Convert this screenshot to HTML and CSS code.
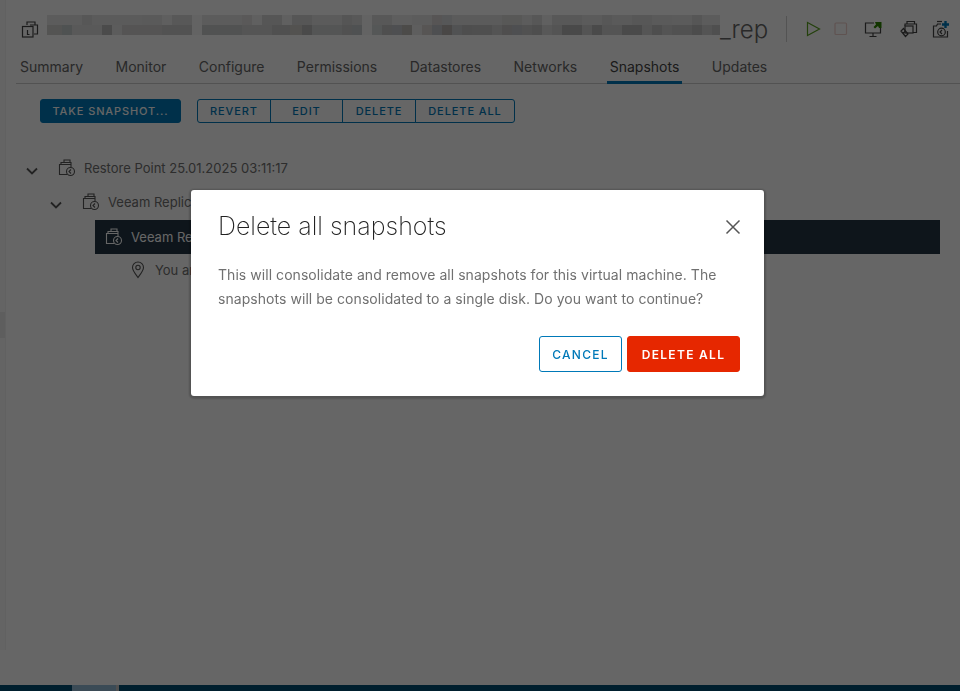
FILE: index.html
```html
<!DOCTYPE html>
<html lang="en">
<head>
  <meta charset="UTF-8" />
  <title>Snapshots</title>
  <link rel="stylesheet" href="styles.css">
</head>
<body>
  <div class="app">
    <div class="sidebar-edge"><span class="grip"></span></div>
    <main class="main">
      <header class="vm-header">
        <svg class="vm-icon" viewBox="0 0 18 18" width="18" height="18"><path d="M6 5V2h8v3M9 5h7.500v9H13" /><rect x="1.500" y="6.500" width="10.500" height="10.500" /><path d="M6.500 10v4.500h2" /></svg>
        <div class="mosaic"></div>
        <span class="vm-name">_rep</span>
        <div class="vm-actions">
          <svg viewBox="0 0 18 18" width="18" height="18" class="act-play"><path d="M3.500 2.500L15.500 9 3.500 15.500Z" /></svg>
          <svg viewBox="0 0 18 18" width="18" height="18" class="act-stop"><rect x="3" y="3" width="11.500" height="11.500" rx="1" /></svg>
          <svg viewBox="0 0 18 18" width="18" height="18" class="act-console"><path d="M10 3H1.500v10h15V8M9 13v3M5.500 16.500h7" /><path class="green" d="M11 2h6.500v6h-2.500l-1-2-3 2.500-1.500-1.500 2.500-2.500z" /></svg>
          <svg viewBox="0 0 18 18" width="18" height="18" class="act-clone"><path d="M7 4V1.500h7.500V4M5 6V4h11.500v8.500H13" /><rect x="5" y="6" width="8" height="7" /><path d="M1 11l4.500 5.500 2.500-2.500L3.500 8.500ZM3 13.500l2.500-2.500" /></svg>
          <svg viewBox="0 0 18 18" width="18" height="18" class="act-snap"><path d="M9 4H5.500L4.500 6H1.500v11h14v-6" /><path d="M5 1.500h5" /><circle cx="9.500" cy="12" r="3.800" /><path d="M10 10l-2 2 2 2" /><path class="blue" d="M13.500 1v7M10 4.500h7" /></svg>
        </div>
      </header>

      <nav class="tabs">
        <a class="tab">Summary</a>
        <a class="tab">Monitor</a>
        <a class="tab">Configure</a>
        <a class="tab">Permissions</a>
        <a class="tab">Datastores</a>
        <a class="tab">Networks</a>
        <a class="tab active">Snapshots</a>
        <a class="tab">Updates</a>
      </nav>

      <div class="toolbar">
        <button class="btn btn-solid">TAKE SNAPSHOT...</button>
        <div class="btn-group">
          <button class="btn w-revert">REVERT</button>
          <button class="btn w-edit">EDIT</button>
          <button class="btn w-delete">DELETE</button>
          <button class="btn w-all">DELETE ALL</button>
        </div>
      </div>

      <div class="tree">
        <div class="tree-row level-0">
          <svg class="caret" viewBox="0 0 12 8" width="12" height="8"><path d="M1 1.500l5 5 5-5" /></svg>
          <svg class="snap" viewBox="0 0 18 18" width="18" height="18"><path d="M6 3.500V1h6v2.500M3 5.500V3.500h10V7M9 15.500H1.500V5.500h11.500V8" /><circle cx="12.500" cy="12.500" r="4" /><path d="M13 10.500l-2 2 2 2" /></svg>
          <span>Restore Point 25.01.2025 03:11:17</span>
        </div>
        <div class="tree-row level-1">
          <svg class="caret" viewBox="0 0 12 8" width="12" height="8"><path d="M1 1.500l5 5 5-5" /></svg>
          <svg class="snap" viewBox="0 0 18 18" width="18" height="18"><path d="M6 3.500V1h6v2.500M3 5.500V3.500h10V7M9 15.500H1.500V5.500h11.500V8" /><circle cx="12.500" cy="12.500" r="4" /><path d="M13 10.500l-2 2 2 2" /></svg>
          <span>Veeam Replica</span>
        </div>
        <div class="tree-row level-2 selected">
          <svg class="snap" viewBox="0 0 18 18" width="18" height="18"><path d="M6 3.500V1h6v2.500M3 5.500V3.500h10V7M9 15.500H1.500V5.500h11.500V8" /><circle cx="12.500" cy="12.500" r="4" /><path d="M13 10.500l-2 2 2 2" /></svg>
          <span>Veeam Replica</span>
        </div>
        <div class="tree-row level-3">
          <svg class="pin" viewBox="0 0 14 18" width="14" height="18"><path d="M7 16.500C4 12.500 1.500 9.500 1.500 6.500a5.500 5.500 0 0 1 11 0c0 3-2.500 6-5.500 10z" /><circle cx="7" cy="6.500" r="2.200" /></svg>
          <span>You are</span>
        </div>
      </div>
    </main>
    <footer class="taskbar"><span class="taskbar-tab"></span></footer>
  </div>

  <div class="backdrop"></div>
  <div class="modal">
    <div class="modal-head">
      <h3>Delete all snapshots</h3>
      <svg class="close" viewBox="0 0 16 16" width="16" height="16"><path d="M1.500 1.500l13 13M14.500 1.500l-13 13" /></svg>
    </div>
    <p>This will consolidate and remove all snapshots for this virtual machine. The snapshots will be consolidated to a single disk. Do you want to continue?</p>
    <div class="modal-foot">
      <button class="mbtn mbtn-outline">CANCEL</button>
      <button class="mbtn mbtn-danger">DELETE ALL</button>
    </div>
  </div>
</body>
</html>
```

FILE: styles.css
```css
html, body {
  height: 100%;
  margin: 0;
  padding: 0;
  background: #fff;
  overflow: hidden;
}
body {
  font-family: Inter, "Open Sans", Arial, sans-serif;
  color: #666;
}
.app {
  display: flex;
  flex-wrap: wrap;
  height: 100vh;
}
.sidebar-edge {
  width: 6px;
  height: 650px;
  background: #fbfbfb;
  border-right: 1px solid #f2f2f2;
  box-sizing: border-box;
  padding-top: 312px;
}
.grip {
  display: block;
  width: 5px;
  height: 26px;
  background: #ececec;
}
.main {
  width: 954px;
  height: 685px;
  box-sizing: border-box;
  padding-left: 14px;
}
.vm-header {
  display: flex;
  align-items: center;
  height: 56px;
  box-sizing: border-box;
  padding-top: 2px;
}
.vm-icon {
  margin-left: 1px;
  fill: none;
  stroke: #444;
  stroke-width: 1.2;
}
/* redacted vm name, two rows of 10px blocks */
.mosaic {
  width: 673px;
  height: 20px;
  margin: 0 0 8px 8px;
  filter: brightness(0.97);
  background:
    linear-gradient(90deg, #eee 0 35px, #e0e0e0 35px 45px, #ebebeb 45px 95px, #e8e8e8 95px 115px, #f4f4f4 115px 125px, #e4e4e4 125px 145px, #fff 145px 155px, #eee 155px 195px, #e8e6e6 195px 205px, #f6f6f6 205px 215px, #dfdfdf 215px 235px, #f6f6f6 235px 245px, #dedede 245px 265px, #ebebeb 265px 295px, #dcdcdc 295px 305px, #e4e4e4 305px 315px, #fff 315px 325px, #e2e2e2 325px 345px, #f2f2f2 345px 365px, #eee 365px 385px, #e0dcdc 385px 395px, #dee0e2 395px 405px, #ebebeb 405px 455px, #e4e2e0 455px 475px, #eee 475px 485px, #e0e0e0 485px 495px, #f6f6f6 495px 505px, #e2e2e2 505px 535px, #ebebeb 535px 555px, #e0e0e0 555px 565px, #e8e8e8 565px 585px, #e0e0e0 585px 605px, #e8e8e8 605px 625px, #ebebeb 625px 645px, #dfdfdf 645px 655px, #eee 655px 673px) 0 0 / 100% 10px no-repeat,
    linear-gradient(90deg, #dad8d6 0 15px, #ccd2d2 15px 25px, #e6e6e6 25px 55px, #c2c2c2 55px 65px, #eee 65px 75px, #dcdad8 75px 115px, #d2d4d4 115px 145px, #fff 145px 155px, #d0d2d2 155px 195px, #dcdcdc 195px 225px, #cfcfcf 225px 243px, #d6d2ce 243px 255px, #bebebe 255px 265px, #d8dcdc 265px 295px, #d0d0d0 295px 305px, #ccd0d4 305px 315px, #fff 315px 325px, #dce0e0 325px 335px, #ccc 335px 345px, #c8ccd0 345px 355px, #c4c2bc 355px 365px, #f2f2f2 365px 375px, #e0dcd8 375px 385px, #c8ccd0 385px 395px, #bcb8b4 395px 405px, #d0d4d6 405px 415px, #c8c8c8 415px 425px, #ccc 425px 445px, #d8d8d8 445px 455px, #ccc8c8 455px 465px, #c8ccd0 465px 475px, #d0d0d0 475px 485px, #c8c8c8 485px 495px, #e4e4e4 495px 505px, #d8d8d8 505px 515px, #bcbcbc 515px 535px, #d8d8d8 535px 545px, #c0c0c0 545px 555px, #d8d8d8 555px 575px, #c0c0c0 575px 595px, #dcdcdc 595px 605px, #c8c8c8 605px 615px, #d8d8d8 615px 625px, #d0d0d0 625px 645px, #c4c4c4 645px 655px, #d8d8d8 655px 665px, #ccc 665px 673px) 0 10px / 100% 10px no-repeat;
}
.vm-name {
  width: 48px;
  font-size: 24px;
  font-weight: 300;
  white-space: nowrap;
  color: #666;
}
.vm-actions {
  display: flex;
  align-items: center;
  gap: 14px;
  margin-left: 18px;
  padding-left: 17px;
  height: 26px;
  border-left: 1px solid #cfcfcf;
}
.vm-actions svg {
  fill: none;
  stroke-width: 1.2;
  stroke: #444;
}
.vm-actions .act-play { stroke: #5aa220; }
.vm-actions .act-stop { stroke: #eecfca; margin-left: -4px; }
.vm-actions .act-clone { margin-left: 4px; }
.vm-actions .green { fill: #2e8500; stroke: none; }
.vm-actions .blue { stroke: #0079b8; stroke-width: 2.4; }
.tabs {
  display: flex;
  gap: 26.5px;
  height: 27px;
  margin-left: -4px;
  padding-left: 1px;
  border-bottom: 1px solid #cccccc;
}
.tab {
  height: 27px;
  box-sizing: border-box;
  padding: 0 3px;
  font-size: 14px;
  line-height: 22px;
  color: #666;
}
.tab.active {
  color: #444;
  border-bottom: 3px solid #0079b8;
  height: 28px;
}
.toolbar {
  display: flex;
  gap: 16px;
  padding: 15px 0 0 20px;
}
.btn {
  height: 24px;
  box-sizing: border-box;
  border: 1px solid #0079b8;
  background: #fff;
  color: #0079b8;
  font: 500 11px Inter, Arial, sans-serif;
  letter-spacing: 0.9px;
  padding: 0;
  border-radius: 3px;
}
.btn-solid {
  width: 141px;
  background: #0079b8;
  color: #fff;
}
.btn-group { display: flex; }
.btn-group .btn { border-radius: 0; margin-left: -1px; }
.btn-group .btn:first-child { border-radius: 3px 0 0 3px; margin-left: 0; }
.btn-group .btn:last-child { border-radius: 0 3px 3px 0; }
.w-revert { width: 74px; }
.w-edit { width: 73px; }
.w-delete { width: 74px; }
.w-all { width: 100px; }
.tree {
  margin-top: 28px;
  display: flex;
  flex-direction: column;
  font-size: 13px;
  color: #707070;
}
.tree-row {
  display: flex;
  align-items: center;
  height: 34px;
  white-space: nowrap;
}
.tree-row svg { fill: none; stroke: #555; stroke-width: 1.1; }
.tree-row .caret { stroke-width: 1.8; margin-top: 5px; }
.level-0 { padding-left: 6px; }
.level-1 { padding-left: 30px; }
.level-2 {
  margin: 1px 0 -1px 75px;
  width: 845px;
  padding-left: 10px;
  box-sizing: border-box;
}
.level-3 { padding-left: 111px; }
.level-0 .snap, .level-1 .snap { margin: 0 8px 0 20px; }
.level-2 .snap { margin-right: 8px; }
.level-3 .pin { margin-right: 10px; }
.selected {
  background: #243644;
  color: #fff;
}
.tree-row.selected svg { stroke: #fff; }
.taskbar {
  width: 100%;
  height: 6px;
  background: #004f73;
  padding-left: 72px;
  box-sizing: border-box;
}
.taskbar-tab {
  display: block;
  width: 44px;
  height: 6px;
  background: #94bcd6;
  border-right: 3px solid #c8c8c8;
}
.backdrop {
  position: fixed;
  inset: 0;
  background: rgba(0, 0, 0, 0.6);
}
.modal {
  position: fixed;
  left: 191px;
  top: 190px;
  width: 573px;
  height: 206px;
  box-sizing: border-box;
  padding: 24px 24px 24px 27px;
  background: #fff;
  border-radius: 3px;
  box-shadow: 0 1px 2px 2px rgba(0, 0, 0, 0.2);
  display: flex;
  flex-direction: column;
}
.modal-head {
  display: flex;
  justify-content: space-between;
  align-items: center;
  height: 24px;
}
.modal-head h3 {
  margin: 0;
  font-size: 25px;
  font-weight: 200;
  color: #222;
}
.close {
  fill: none;
  stroke: #565656;
  stroke-width: 1.5;
  margin: 2px -1px 0 0;
}
.modal p {
  margin: 25px 0 0;
  font-size: 14px;
  letter-spacing: 0.05px;
  line-height: 24px;
  color: #707070;
}
.modal-foot {
  display: flex;
  justify-content: flex-end;
  gap: 5px;
  margin-top: auto;
}
.mbtn {
  height: 36px;
  box-sizing: border-box;
  border-radius: 3px;
  font: 500 12px Inter, Arial, sans-serif;
  letter-spacing: 1.3px;
  padding: 0;
}
.mbtn-outline { width: 83px; background: #fff; border: 1px solid #0079b8; color: #0079b8; }
.mbtn-danger { width: 113px; background: #e62700; border: 1px solid #e62700; color: #fff; font-weight: 600; }
```
